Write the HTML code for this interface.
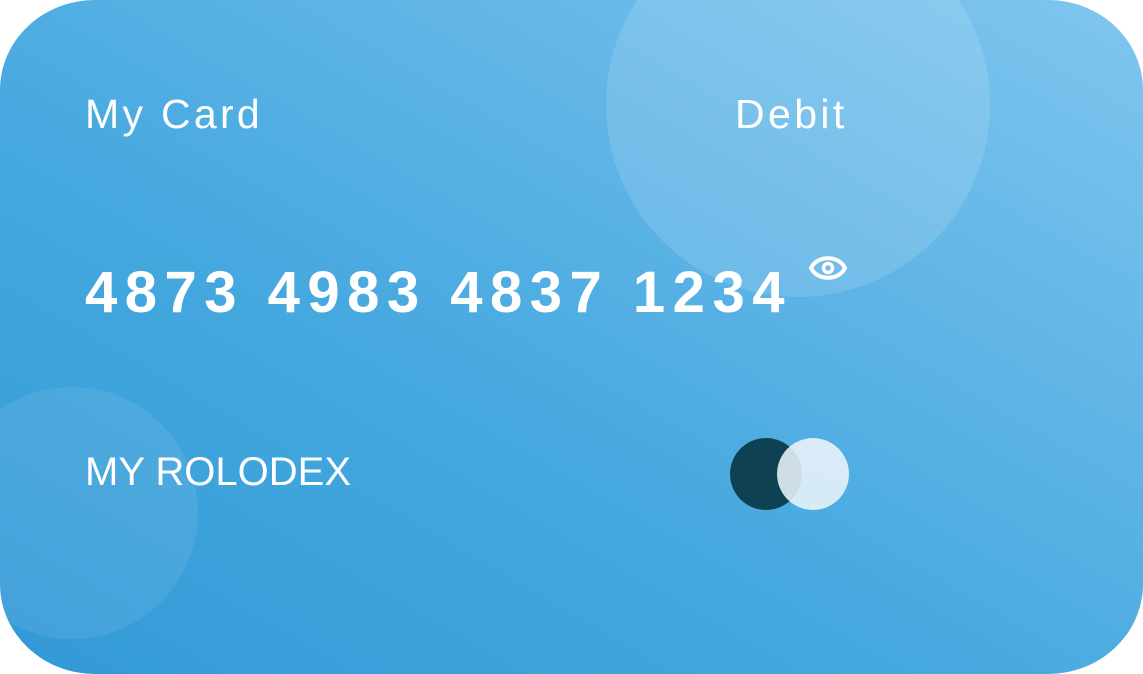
<!DOCTYPE html><html><head><style>
html,body{margin:0;padding:0;background:#fff;width:1143px;height:674px;overflow:hidden}
.card{position:absolute;left:0;top:0;width:1143px;height:674px;border-radius:95px/90px;overflow:hidden;
background:linear-gradient(30deg,#3399d6 0%,#45a8df 40%,#62b6e7 70%,#80c6ef 100%);font-family:"Liberation Sans",sans-serif;color:#fff}
.c{position:absolute;border-radius:50%;background:rgba(255,255,255,0.13)}
.t{position:absolute;white-space:nowrap}
</style></head><body><div class="card">
<div class="c" style="left:606px;top:-87px;width:384px;height:384px"></div>
<div class="c" style="left:-54px;top:387px;width:252px;height:252px;background:rgba(255,255,255,0.08)"></div>
<div class="t" style="left:85px;top:91px;font-size:41px;letter-spacing:3.3px">My Card</div>
<div class="t" style="left:735px;top:91px;font-size:41px;letter-spacing:3.4px">Debit</div>
<div class="t" style="left:85px;top:259px;font-size:58px;font-weight:bold;letter-spacing:7.5px">4873 4983 4837 1234</div>
<svg style="position:absolute;left:808px;top:252px" width="40" height="32" viewBox="0 0 40 32"><path d="M3 16 C9 3 31 3 37 16 C31 29 9 29 3 16Z" fill="none" stroke="#fff" stroke-width="4"/><circle cx="20" cy="16" r="4.5" fill="none" stroke="#fff" stroke-width="3.5"/></svg>
<div class="t" style="left:85px;top:450px;font-size:40px">MY ROLODEX</div>
<div style="position:absolute;left:730px;top:438px;width:72px;height:72px;border-radius:50%;background:#0e4252"></div>
<div style="position:absolute;left:777px;top:438px;width:72px;height:72px;border-radius:50%;background:rgba(235,244,248,0.88)"></div>
</div></body></html>
